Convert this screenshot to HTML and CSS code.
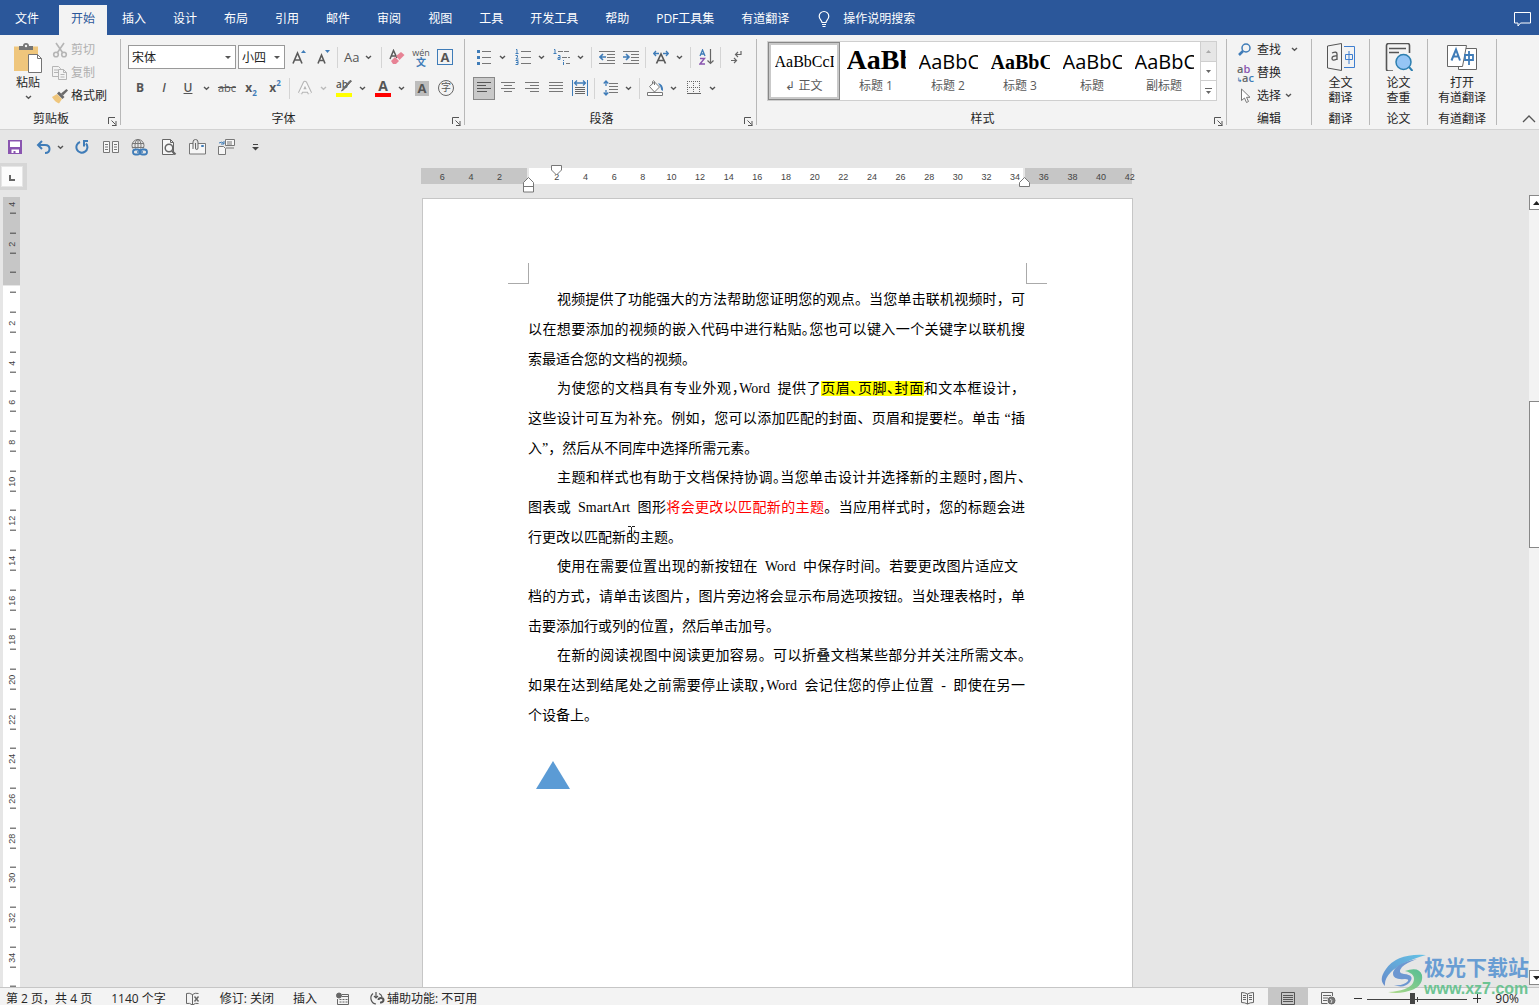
FILE: index.html
```html
<!DOCTYPE html>
<html lang="zh-CN">
<head>
<meta charset="utf-8">
<title>Word</title>
<link rel="stylesheet" href="styles.css">
</head>
<body>
<svg class="defs" aria-hidden="true">
  <symbol id="chev" viewBox="0 0 7 5"><path d="M1 1l2.500 2.200L6 1" fill="none" stroke="currentColor" stroke-width="1.400"/></symbol>
  <symbol id="launch" viewBox="0 0 9 9"><path d="M.5 7V.5H7M3.500 3.500l4 4M8 4v4.500M4 8.500h4.500" fill="none" stroke="#555"/></symbol>
</svg>

<nav class="tabs">
  <button class="tab file">文件</button>
  <button class="tab active">开始</button>
  <button class="tab">插入</button>
  <button class="tab">设计</button>
  <button class="tab">布局</button>
  <button class="tab">引用</button>
  <button class="tab">邮件</button>
  <button class="tab">审阅</button>
  <button class="tab">视图</button>
  <button class="tab">工具</button>
  <button class="tab">开发工具</button>
  <button class="tab">帮助</button>
  <button class="tab">PDF工具集</button>
  <button class="tab">有道翻译</button>
  <button class="tab tell"><svg width="16" height="18" viewBox="0 0 16 18" fill="none" stroke="#fff" stroke-width="1.200"><path d="M6 12.500c0-2-2.800-3-2.800-6.200a4.800 4.800 0 0 1 9.600 0c0 3.200-2.800 4.200-2.800 6.200zM6 14.500h4M6.500 16.500h3"/></svg>操作说明搜索</button>
  <button class="comment" aria-label="批注"><svg width="17" height="15" viewBox="0 0 17 15" fill="none" stroke="#fff"><path d="M.5.5h16v10.500H6.500l-2.500 3v-3H.5z"/></svg></button>
</nav>

<header class="ribbon">
  <section class="group clip">
    <div class="body">
      <button class="paste">
        <svg width="30" height="31" viewBox="0 0 30 31"><path d="M1 4.500h24V29H1z" fill="#efc67c"/><path d="M6 8V4h4a3 3 0 0 1 6 0h4v4z" fill="#747474"/><circle cx="13" cy="4" r="1.200" fill="#f3f3f3"/><path d="M15.500 12.500h9l4 4V30.500h-13z" fill="#fff" stroke="#747474"/><path d="M24.500 12.500v4h4" fill="none" stroke="#747474"/></svg>
        <span>粘贴</span>
        <svg class="caret" width="7" height="5"><use href="#chev"/></svg>
      </button>
      <div class="stack">
        <button class="small" disabled><svg width="16" height="16" viewBox="0 0 16 16" fill="none" stroke="#b5b5b5" stroke-width="1.600"><path d="M4 1l6.500 9.500M12 1L5.500 10.500"/><circle cx="4" cy="12.500" r="2.300"/><circle cx="12" cy="12.500" r="2.300"/></svg>剪切</button>
        <button class="small" disabled><svg width="16" height="16" viewBox="0 0 16 16" fill="#f3f3f3" stroke="#b5b5b5"><path d="M.5 1.500h6l2 2v8h-8zM2 5h4M2 7.500h4"/><path d="M6.500 4.500h5l3 3v7h-8zM11.500 4.500v3h3M8.500 9.500h4M8.500 12h4"/></svg>复制</button>
        <button class="small"><svg width="16" height="16" viewBox="0 0 16 16"><path d="M0 9l5-3 5 5-3 4.500q-4-1.500-7-6.500z" fill="#efc67c"/><path d="M5 5.500l2-2 5.500 5.500-2 2z" fill="#6a6a6a"/><path d="M9 5.500L14.500 1 16 2.500 11 7.500z" fill="#6a6a6a"/></svg>格式刷</button>
      </div>
    </div>
    <footer><span>剪贴板</span><button class="launch" aria-label="剪贴板设置"><svg width="9" height="9"><use href="#launch"/></svg></button></footer>
  </section>

  <section class="group font">
    <div class="body rows">
      <div class="row">
        <span class="pick family"><select aria-label="字体"><option>宋体</option></select></span>
        <span class="pick size"><select aria-label="字号"><option>小四</option></select></span>
        <button class="cell" aria-label="增大字号"><svg width="14" height="16" viewBox="0 0 14 16"><path d="M1 14.500L5.500 4l4.500 10.500M2.800 11h5.500" fill="none" stroke="#5a5a5a" stroke-width="1.600"/><path d="M9 4h5l-2.500-3z" fill="#3f7cb8"/></svg></button>
        <button class="cell" aria-label="减小字号"><svg width="14" height="16" viewBox="0 0 14 16"><path d="M2 14.500L5.500 6 9 14.500M3.500 11.500h4" fill="none" stroke="#5a5a5a" stroke-width="1.600"/><path d="M9 1h5l-2.500 3z" fill="#3f7cb8"/></svg></button>
        <i class="sep"></i>
        <button class="case">Aa<svg class="caret" width="7" height="5"><use href="#chev"/></svg></button>
        <i class="sep"></i>
        <button class="cell" aria-label="清除格式"><svg width="16" height="16" viewBox="0 0 16 16"><path d="M1 10L4.500 1.500 8 9M2.500 7h4" fill="none" stroke="#5a5a5a" stroke-width="1.500"/><path d="M2 12l4-4 4 4-3 3H4z" fill="#e78294"/><path d="M7 7l5-4 3.500 3-5 5z" fill="#e78294"/></svg></button>
        <button class="cell pinyin"><span>wén</span><b>文</b></button>
        <button class="cell"><span class="charbox">A</span></button>
      </div>
      <div class="row">
        <button class="cell bold">B</button>
        <button class="cell italic">I</button>
        <button class="cell under">U</button><button class="drop" aria-label="下划线样式"><svg class="caret" width="7" height="5"><use href="#chev"/></svg></button>
        <button class="cell strike">abc</button>
        <button class="cell script">x<sub>2</sub></button>
        <button class="cell script">x<sup>2</sup></button>
        <i class="sep"></i>
        <button class="cell" aria-label="文本效果"><svg width="16" height="16" viewBox="0 0 16 16" fill="none" stroke-linejoin="round"><path d="M3 13.500L8 3l5 10.500M5 10.500h6" stroke="#b5b5b5" stroke-width="4.500"/><path d="M3 13.500L8 3l5 10.500M5 10.500h6" stroke="#f8f8f8" stroke-width="2.400"/></svg></button><button class="drop off" aria-label="文本效果选项"><svg class="caret" width="7" height="5"><use href="#chev"/></svg></button>
        <button class="cell mark yellow"><span>ab</span><svg width="16" height="12" viewBox="0 0 16 12"><path d="M15.500 1L8 9.500l-2.500 1.500L7 8.500 14 .5z" fill="#6a6a6a" stroke="#6a6a6a"/></svg></button><button class="drop" aria-label="突出显示颜色"><svg class="caret" width="7" height="5"><use href="#chev"/></svg></button>
        <button class="cell mark red"><b>A</b></button><button class="drop" aria-label="字体颜色"><svg class="caret" width="7" height="5"><use href="#chev"/></svg></button>
        <button class="cell"><span class="shade">A</span></button>
        <button class="cell"><span class="ring">字</span></button>
      </div>
    </div>
    <footer><span>字体</span><button class="launch" aria-label="字体设置"><svg width="9" height="9"><use href="#launch"/></svg></button></footer>
  </section>

  <section class="group para">
    <div class="body rows">
      <div class="row">
        <button class="cell" aria-label="项目符号"><svg width="16" height="16" viewBox="0 0 16 16"><path d="M6 2.500h9M6 8.500h9M6 14.500h9" stroke="#777"/><path d="M1 1h3v3H1zM1 7h3v3H1zM1 13h3v3H1z" fill="#3f7cb8"/></svg></button><button class="drop" aria-label="项目符号库"><svg class="caret" width="7" height="5"><use href="#chev"/></svg></button>
        <button class="cell" aria-label="编号"><svg width="16" height="16" viewBox="0 0 16 16"><path d="M6 2.500h10M6 8.500h10M6 14.500h10" stroke="#777"/><path d="M1 .5h1V4M.5 4.500h3M.5 6.500h2v1.500L1 10h2.500M.5 11.500h2.500v4H.5M1 13.500h2" fill="none" stroke="#3f7cb8"/></svg></button><button class="drop" aria-label="编号库"><svg class="caret" width="7" height="5"><use href="#chev"/></svg></button>
        <button class="cell" aria-label="多级列表"><svg width="18" height="16" viewBox="0 0 18 16"><path d="M5 2.500h11M9 8.500h8M13 14.500h4" stroke="#777" stroke-dasharray="5 1"/><path d="M1 .5h1V4M.5 4.500h3M5 6.500h2v4H5v-2h2M10.500 11v1M10.500 13v3" fill="none" stroke="#3f7cb8"/></svg></button><button class="drop" aria-label="多级列表库"><svg class="caret" width="7" height="5"><use href="#chev"/></svg></button>
        <i class="sep"></i>
        <button class="cell" aria-label="减少缩进"><svg width="16" height="14" viewBox="0 0 16 14"><path d="M0 1.500h16M8 4.500h8M8 7.500h8M8 10.500h8M0 13.500h16" stroke="#777"/><path d="M7 7H1.500M4 4L1 7l3 3" stroke="#3f7cb8" stroke-width="1.600" fill="none"/></svg></button>
        <button class="cell" aria-label="增加缩进"><svg width="16" height="14" viewBox="0 0 16 14"><path d="M0 1.500h16M8 4.500h8M8 7.500h8M8 10.500h8M0 13.500h16" stroke="#777"/><path d="M0 7h5.500M3 4l3 3-3 3" stroke="#3f7cb8" stroke-width="1.600" fill="none"/></svg></button>
        <i class="sep"></i>
        <button class="cell" aria-label="中文版式"><svg width="16" height="14" viewBox="0 0 16 14" fill="none"><path d="M3.500 13.500L8 4l4.500 9.500M5 10.500h6" stroke="#5a5a5a" stroke-width="1.700"/><path d="M6 3.500H1M3 1L.7 3.500 3 6M10 3.500h5M13 1l2.300 2.500L13 6" stroke="#3f7cb8" stroke-width="1.300"/></svg></button><button class="drop" aria-label="中文版式选项"><svg class="caret" width="7" height="5"><use href="#chev"/></svg></button>
        <i class="sep"></i>
        <button class="cell" aria-label="排序"><svg width="15" height="16" viewBox="0 0 15 16" fill="none"><path d="M1 7l2.500-6L6 7M2 5h3" stroke="#3f7cb8" stroke-width="1.300"/><path d="M1 9.500h4.500L1 15h5" stroke="#8a55b0" stroke-width="1.400"/><path d="M11.500 0v14.500M8.500 11.500l3 3 3-3" stroke="#666" stroke-width="1.200"/></svg></button>
        <i class="sep"></i>
        <button class="cell" aria-label="显示编辑标记"><svg width="11" height="13" viewBox="0 0 11 13" fill="none" stroke="#666" stroke-width="1.200"><path d="M10 0v3.500H5M7 1L4.500 3.500 7 6M0 9.500h5.500M3 7l2.500 2.500L3 12"/></svg></button>
      </div>
      <div class="row">
        <button class="cell pressed" aria-label="左对齐"><svg width="15" height="12" viewBox="0 0 15 12" stroke="#555"><path d="M0 .5h14M0 3.500h9M0 6.500h14M0 9.500h10"/></svg></button>
        <button class="cell" aria-label="居中"><svg width="15" height="12" viewBox="0 0 15 12" stroke="#777"><path d="M0 .5h14M3 3.500h8M0 6.500h14M3 9.500h8"/></svg></button>
        <button class="cell" aria-label="右对齐"><svg width="15" height="12" viewBox="0 0 15 12" stroke="#777"><path d="M0 .5h14M5 3.500h9M0 6.500h14M5 9.500h9"/></svg></button>
        <button class="cell" aria-label="两端对齐"><svg width="15" height="12" viewBox="0 0 15 12" stroke="#777"><path d="M0 .5h14M0 3.500h14M0 6.500h14M0 9.500h14"/></svg></button>
        <button class="cell" aria-label="分散对齐"><svg width="16" height="16" viewBox="0 0 16 16" fill="none"><path d="M.5 0v16M15.500 0v16" stroke="#3f7cb8"/><path d="M2.500 3h11M5 .5L2.500 3 5 5.500M11 .5L13.500 3 11 5.500" stroke="#3f7cb8" stroke-width="1.300"/><path d="M3 7.500h10M3 9.500h10M3 11.500h10M3 13.500h10" stroke="#666"/></svg></button>
        <i class="sep"></i>
        <button class="cell" aria-label="行距"><svg width="15" height="16" viewBox="0 0 15 16" fill="none"><path d="M6 3.500h9M6 6.500h9M6 9.500h9M6 12.500h9" stroke="#777"/><path d="M3 1v5M.7 3.500L3 1l2.300 2.500M3 10v5M.7 12.500L3 15l2.300-2.500" stroke="#3f7cb8" stroke-width="1.300"/></svg></button><button class="drop" aria-label="行距选项"><svg class="caret" width="7" height="5"><use href="#chev"/></svg></button>
        <i class="sep"></i>
        <button class="cell" aria-label="底纹"><svg width="17" height="16" viewBox="0 0 17 16"><path d="M2.500 6.500L7.500 2l5 5-5 5z" fill="#fff" stroke="#777"/><path d="M7.500 5V1.500a1.200 1.200 0 0 0-2 0V4" fill="none" stroke="#777"/><path d="M11 3q5.500 1 5 8-2.500-1-2.500-4z" fill="#3f7cb8"/><path d="M.5 12.500h15v3H.5z" fill="#fff" stroke="#777"/></svg></button><button class="drop" aria-label="底纹颜色"><svg class="caret" width="7" height="5"><use href="#chev"/></svg></button>
        <button class="cell" aria-label="边框"><svg width="14" height="14" viewBox="0 0 14 14" stroke="#666"><path d="M0 .5h13M0 6.500h13M.5 0v13M6.500 0v13M12.500 0v13" stroke-dasharray="1 1"/><path d="M0 12.500h14"/></svg></button><button class="drop" aria-label="边框选项"><svg class="caret" width="7" height="5"><use href="#chev"/></svg></button>
      </div>
    </div>
    <footer><span>段落</span><button class="launch" aria-label="段落设置"><svg width="9" height="9"><use href="#launch"/></svg></button></footer>
  </section>

  <section class="group styles">
    <div class="body">
      <div class="gallery">
        <button class="style chosen"><span class="look normal">AaBbCcI</span><span>↲ 正文</span></button>
        <button class="style"><span class="look h1">AaBbC</span><span>标题 1</span></button>
        <button class="style"><span class="look h2">AaBbC</span><span>标题 2</span></button>
        <button class="style"><span class="look h3">AaBbC</span><span>标题 3</span></button>
        <button class="style"><span class="look h2">AaBbC</span><span>标题</span></button>
        <button class="style"><span class="look subtitle">AaBbC</span><span>副标题</span></button>
        <div class="scroller">
          <button class="dim" aria-label="上一行"><svg width="5" height="3"><path d="M0 3h5L2.500 0z" fill="#aaa"/></svg></button>
          <button aria-label="下一行"><svg width="5" height="3"><path d="M0 0h5L2.500 3z" fill="#666"/></svg></button>
          <button aria-label="更多样式"><svg width="7" height="6"><path d="M0 .5h7" stroke="#666"/><path d="M1 3h5L3.500 6z" fill="#666"/></svg></button>
        </div>
      </div>
    </div>
    <footer><span>样式</span><button class="launch" aria-label="样式设置"><svg width="9" height="9"><use href="#launch"/></svg></button></footer>
  </section>

  <section class="group edit">
    <div class="body stack">
      <button class="small"><svg width="16" height="16" viewBox="0 0 16 16" fill="none" stroke="#3f7cb8"><circle cx="9" cy="6" r="4" stroke-width="1.500"/><path d="M6 9l-4 4" stroke-width="2.500"/></svg>查找<svg class="caret far" width="7" height="5"><use href="#chev"/></svg></button>
      <button class="small"><span class="swap"><span>a<em>b</em></span><span><i>↳</i>a<b>c</b></span></span>替换</button>
      <button class="small"><svg width="16" height="16" viewBox="0 0 16 16" fill="#fff" stroke="#777"><path d="M4.500 1v11.500l3-2.500 2 4.500 2-1-2-4.200h3.500z"/></svg>选择<svg class="caret near" width="7" height="5"><use href="#chev"/></svg></button>
    </div>
    <footer><span>编辑</span></footer>
  </section>

  <section class="group add">
    <button class="tall body">
      <svg width="28" height="28" viewBox="0 0 28 28" fill="none"><path d="M.5 3L14.500.5v27L.5 25z" stroke="#555"/><path d="M17 3.500h10.500v21H17" stroke="#3f7fd0"/><path d="M5 10q5-2 5 1v6M10 13q-5-.5-5 2.500t5 .5" stroke="#555" stroke-width="1.300"/><path d="M18.500 11.500h7v5h-7zM22 8v13" stroke="#3f7fd0"/></svg>
      <span>全文</span><span>翻译</span>
    </button>
    <footer><span>翻译</span></footer>
  </section>
  <section class="group add">
    <button class="tall body">
      <svg width="28" height="28" viewBox="0 0 28 28" fill="none"><path d="M24.500 10V2.500a2 2 0 0 0-2-2h-19a2 2 0 0 0-2 2V26q0 2 2 2H8" stroke="#555" stroke-width="1.600"/><path d="M4 5.500h17M4 9.500h10" stroke="#555" stroke-width="1.600"/><circle cx="18.500" cy="19" r="7.500" fill="#95c5f5" stroke="#2d7fb0" stroke-width="1.500"/><path d="M24 24l3.500 4" stroke="#2d7fb0" stroke-width="2"/></svg>
      <span>论文</span><span>查重</span>
    </button>
    <footer><span>论文</span></footer>
  </section>
  <section class="group add wide">
    <button class="tall body">
      <svg width="30" height="28" viewBox="0 0 30 28" fill="#fff" stroke="#666"><path d="M11.500 5.500h18v21h-18v-3z"/><path d="M.5 2.500h19l-4 21H.5z"/><path d="M4.500 17.500L9 6.500l4 11M6 13.500h5.500" fill="none" stroke="#3f7cb8" stroke-width="2"/><path d="M18 12h8v5h-8zM22 8v14" fill="none" stroke="#3f7cb8" stroke-width="1.800"/></svg>
      <span>打开</span><span>有道翻译</span>
    </button>
    <footer><span>有道翻译</span></footer>
  </section>
  <button class="collapse" aria-label="折叠功能区"><svg width="14" height="8" viewBox="0 0 14 8"><path d="M1 7l6-6 6 6" fill="none" stroke="#555" stroke-width="1.300"/></svg></button>
</header>

<div class="quick">
  <button aria-label="保存"><svg width="14" height="14" viewBox="0 0 14 14"><path d="M0 0h14v14H0z" fill="#8a55b0"/><path d="M2 1.500h10v5.500H2zM3.500 9.500h7.500V13H7.500v-2H5.500v2h-2z" fill="#fff"/></svg></button>
  <button aria-label="撤消"><svg width="16" height="14" viewBox="0 0 16 14" fill="none" stroke="#3f7cb8" stroke-width="2"><path d="M6 1L2 5l4 4M2 5h7q4.500 0 4.500 4t-4.500 4"/></svg></button>
  <button class="mini" aria-label="撤消列表"><svg class="caret" width="7" height="5"><use href="#chev"/></svg></button>
  <button aria-label="重复"><svg width="14" height="14" viewBox="0 0 14 14" fill="none" stroke="#3f7cb8" stroke-width="2"><path d="M5 2a5.500 5.500 0 1 0 6 1.500M8 1h5M9 1v5.500"/></svg></button>
  <button aria-label="双页"><svg width="16" height="12" viewBox="0 0 16 12" fill="#f6f6f6" stroke="#777"><path d="M.5.5h6v11h-6zM9.500.5h6v11h-6zM2 3.500h3M2 6h3M2 8.500h3M11 3.500h3M11 6h3M11 8.500h3"/></svg></button>
  <button aria-label="链接"><svg width="17" height="17" viewBox="0 0 17 17" fill="none"><circle cx="7" cy="6.500" r="6" stroke="#777"/><ellipse cx="7" cy="6.500" rx="3" ry="6" stroke="#777"/><path d="M1 4.500h12M1 8.500h12M7 .5v8" stroke="#777"/><path d="M1 9.500h16v7.500H1z" fill="#e6e6e6"/><rect x="2" y="10.500" width="7" height="5" rx="2.500" stroke="#3f7cb8" stroke-width="1.800"/><rect x="9" y="10.500" width="7" height="5" rx="2.500" stroke="#3f7cb8" stroke-width="1.800"/><path d="M6 13h6" stroke="#3f7cb8" stroke-width="1.500"/></svg></button>
  <button aria-label="打印预览"><svg width="16" height="16" viewBox="0 0 16 16" fill="#f6f6f6" stroke="#666"><path d="M1.500.5h8l3 3v12h-11zM9.500.5v3h3"/><circle cx="8" cy="9" r="3.800" stroke-width="1.500"/><path d="M11 12l3.500 3.500" stroke-width="2.200"/></svg></button>
  <button aria-label="附件"><svg width="17" height="16" viewBox="0 0 17 16" fill="#f6f6f6" stroke="#777"><path d="M.5 4.500h16v10.500H.5z"/><path d="M4 10V3q0-2.500 2.500-2.500T9 3v6q0 1.500-1.300 1.500T6.500 9V4" stroke="#666" fill="#e6e6e6"/><path d="M12.500 6.500h2v1h-2z" stroke="#3f7cb8"/></svg></button>
  <button aria-label="切换"><svg width="17" height="16" viewBox="0 0 17 16" fill="#f6f6f6" stroke="#777"><path d="M7.500.5h9v6h-9zM9 3h5M9 5h5M8 9h8"/><path d="M.5 7.500h5l2 2v6h-7z"/><path d="M1 4q3-2 5 .5M6 2v3H3" fill="none" stroke="#3f7cb8"/></svg></button>
  <button aria-label="自定义快速访问工具栏"><svg width="7" height="7"><path d="M1 .5h5" stroke="#444"/><path d="M0 3h7L3.500 6.500z" fill="#444"/></svg></button>
</div>

<main class="work">
  <div class="corner"><button aria-label="制表符"><svg width="6" height="6"><path d="M1 0v5h5" fill="none" stroke="#666" stroke-width="2"/></svg></button></div>
  <div class="hruler">
    <div class="marks"><span>6</span><span>4</span><span>2</span><span></span><span>2</span><span>4</span><span>6</span><span>8</span><span>10</span><span>12</span><span>14</span><span>16</span><span>18</span><span>20</span><span>22</span><span>24</span><span>26</span><span>28</span><span>30</span><span>32</span><span>34</span><span>36</span><span>38</span><span>40</span><span>42</span></div>
    <svg class="indent left" width="12" height="17" viewBox="0 0 12 17" fill="#fff" stroke="#777"><path d="M.5 5.500l5-5 5 5v9.500h-10zM.5 9.500h10"/></svg>
    <svg class="indent first" width="12" height="11" viewBox="0 0 12 11" fill="#fff" stroke="#777"><path d="M.5.5h10v4.500l-5 5-5-5z"/></svg>
    <svg class="indent right" width="12" height="11" viewBox="0 0 12 11" fill="#fff" stroke="#777"><path d="M.5 5.500l5-5 5 5v4h-10z"/></svg>
  </div>
  <div class="vruler">
    <div class="marks"><span>4</span><span>2</span><span></span><span>2</span><span>4</span><span>6</span><span>8</span><span>10</span><span>12</span><span>14</span><span>16</span><span>18</span><span>20</span><span>22</span><span>24</span><span>26</span><span>28</span><span>30</span><span>32</span><span>34</span><span>36</span></div>
  </div>
  <article class="page">
    <div class="crops"><i></i><i></i></div>
    <div class="text">
      <p><span class="line in">视频提供了功能强大的方法帮助您证明您的观点。当您单击联机视频时，可</span><span class="line">以在想要添加的视频的嵌入代码中进行粘贴<s>。</s>您也可以键入一个关键字以联机搜</span><span class="line end">索最适合您的文档的视频。</span></p>
      <p><span class="line in">为使您的文档具有专业外观<s>，</s>Word&ensp;提供了<mark>页眉<s>、</s>页脚<s>、</s>封面</mark>和文本框设计，</span><span class="line">这些设计可互为补充。例如，您可以添加匹配的封面、页眉和提要栏。单击 “插</span><span class="line end">入”，然后从不同库中选择所需元素。</span></p>
      <p><span class="line in">主题和样式也有助于文档保持协调<s>。</s>当您单击设计并选择新的主题时<s>，</s>图片<s>、</s></span><span class="line">图表或&ensp;SmartArt&ensp;图形<em>将会更改以匹配新的主题</em>。当应用样式时，您的标题会进</span><span class="line end">行更改以匹配新的主题。</span></p>
      <p><span class="line in short">使用在需要位置出现的新按钮在&ensp;Word&ensp;中保存时间。若要更改图片适应文</span><span class="line">档的方式，请单击该图片，图片旁边将会显示布局选项按钮。当处理表格时，单</span><span class="line end">击要添加行或列的位置，然后单击加号。</span></p>
      <p><span class="line in">在新的阅读视图中阅读更加容易。可以折叠文档某些部分并关注所需文本<s>。</s></span><span class="line">如果在达到结尾处之前需要停止读取<s>，</s>Word&ensp;会记住您的停止位置&ensp;-&ensp;即使在另一</span><span class="line end">个设备上。</span></p>
    </div>
    <svg class="triangle" width="36" height="30" viewBox="0 0 36 30"><path d="M18 1l17 28H1z" fill="#5b9bd5"/></svg>
    <svg class="ibeam" width="7" height="16" viewBox="0 0 7 16" fill="none" stroke="#222"><path d="M0 .5h3M4 .5h3M3.500 1v14M0 15.500h3M4 15.500h3"/></svg>
  </article>
  <div class="vscroll">
    <button aria-label="向上滚动"><svg width="7" height="4"><path d="M0 4h7L3.500 0z" fill="#222"/></svg></button>
    <i></i>
    <button aria-label="向下滚动"><svg width="7" height="4"><path d="M0 0h7L3.500 4z" fill="#222"/></svg></button>
  </div>
</main>

<footer class="status">
  <div class="inner">
    <span>第 2 页，共 4 页</span>
    <span>1140 个字</span>
    <svg width="16" height="14" viewBox="0 0 16 14" fill="none" stroke="#666"><path d="M7.500 2.500Q4 .5 1.500 1.500v10q3-1 6 1.500 3-2.500 6-1.500M7.500 2.500V13M7.500 2.500Q10 .5 13.500 1.500"/><path d="M9.500 4.500l4 5M13.500 4.500l-4 5" stroke-width="1.400"/></svg>
    <span>修订: 关闭</span>
    <span>插入</span>
    <svg width="14" height="14" viewBox="0 0 14 14" fill="none" stroke="#666"><path d="M6 2.500h6.500v10h-11V7M6 4.500h6"/><path d="M3.500 7.500h8M3.500 10h8" stroke-dasharray="2 1"/><circle cx="3" cy="3.500" r="2.500" fill="#666"/></svg>
    <span class="access"><svg width="16" height="16" viewBox="0 0 16 16" fill="none" stroke="#555" stroke-width="1.200"><path d="M4 2.500a6 6 0 0 0 3 10.500M7 1v6M5 5l2 2 2-2M10 2.500q2.500 1 3 3.500" /><path d="M9.500 9q0-2 2.500-2t2.500 2-2.500 2.500v1M12 14v1.500" stroke-width="2"/></svg>辅助功能: 不可用</span>
    <div class="views">
      <button aria-label="阅读视图"><svg width="14" height="13" viewBox="0 0 14 13" fill="none" stroke="#666"><path d="M6.500 2Q4 .5.500.5v10q3.500 0 6 1.500 2.500-1.500 6-1.500V.5Q9 .5 6.500 2v10M2 3.500h3M2 5.500h3M2 7.500h3M8 3.500h3M8 5.500h3M8 7.500h3"/></svg></button>
      <button class="on" aria-label="页面视图"><svg width="14" height="13" viewBox="0 0 14 13" fill="none" stroke="#555"><path d="M.5.5h13v12H.5zM2 3.500h10M2 5.500h10M2 7.500h10M2 9.500h10"/></svg></button>
      <button aria-label="Web 版式"><svg width="15" height="13" viewBox="0 0 15 13" fill="none" stroke="#666"><path d="M11.500 4V.5H.5v11h6M2 3.500h8M2 6h5M2 8.500h4"/><circle cx="10.500" cy="8.500" r="3.500" fill="#777"/><path d="M9 7l2 1.500-1 2.500" stroke="#ddd"/></svg></button>
    </div>
    <button class="zoom" aria-label="缩小"><svg width="9" height="9"><path d="M0 4.500h8" stroke="#333"/></svg></button>
    <input type="range" min="0" max="100" value="45" aria-label="缩放">
    <button class="zoom" aria-label="放大"><svg width="9" height="9"><path d="M0 4.500h8M4.500 0v9" stroke="#333"/></svg></button>
    <span class="percent">90%</span>
  </div>
</footer>

<aside class="brand">
  <svg width="46" height="42" viewBox="0 0 46 42">
    <defs>
      <linearGradient id="sky" x1="0" y1="1" x2="1" y2="0"><stop offset="0" stop-color="#5a83c9"/><stop offset="1" stop-color="#55bfe6"/></linearGradient>
      <linearGradient id="leaf" x1="0" y1="1" x2="1" y2="0"><stop offset="0" stop-color="#a8d87c"/><stop offset="1" stop-color="#45b98b"/></linearGradient>
    </defs>
    <path d="M45 1Q16-1 5 15-3 26 4 32q-1-7 6-14Q20 8 45 1z" fill="url(#sky)"/>
    <path d="M36 5Q12 10 12 20q0 6 12 5 4 0 3 2-4 5-14 4 10 4 16-3 5-7-6-8-7-1-2-7 4-4 15-8z" fill="#5f8fcf"/>
    <path d="M24 17q14-5 17 4 2 13-17 17-10 2-17 0 20-1 25-9 4-9-8-12z" fill="url(#leaf)"/>
  </svg>
  <div><strong>极光下载站</strong><span>www.xz7.com</span></div>
</aside>
</body>
</html>
```
FILE: styles.css
```css
* { box-sizing: border-box; }
html, body { height: 100%; }
body {
  margin: 0;
  display: flex;
  flex-direction: column;
  overflow: hidden;
  position: relative;
  background: #e6e6e6;
  color: #262626;
  font: 12px/16px "Open Sans", "Noto Sans CJK SC", sans-serif;
}
svg { display: block; flex: none; }
.defs { position: absolute; width: 0; height: 0; }
button {
  border: 0;
  padding: 0;
  background: none;
  color: inherit;
  font: inherit;
  white-space: nowrap;
}
.caret { color: #555; }

/* tab strip */
.tabs {
  flex: none;
  display: flex;
  align-items: flex-end;
  gap: 3px;
  height: 35px;
  padding-left: 3px;
  background: #2b579a;
  color: #fff;
}
.tab { height: 30px; padding: 0 12px 2px; }
.tab.file { margin-right: 5px; }
.tab.active { background: #f3f3f3; color: #2b579a; }
.tab.tell { display: flex; align-items: center; gap: 11px; }
.comment { margin: 0 8px 8px auto; }

/* ribbon */
.ribbon {
  flex: none;
  display: flex;
  height: 95px;
  padding: 4px 0;
  background: #f3f3f3;
  border-bottom: 1px solid #d2d2d2;
}
.group {
  flex: none;
  display: flex;
  flex-direction: column;
  border-right: 1px solid #b8b8b8;
}
.group footer { flex: none; display: flex; height: 15px; line-height: 18px; text-align: center; }
.group footer span { flex: 1; }
.launch { width: 18px; padding: 7px 0 0 6px; }
.body { flex: 1; min-height: 0; }
.rows { display: flex; flex-direction: column; gap: 7px; padding: 6px 0 0 7px; }
.row { display: flex; align-items: center; height: 24px; }
.cell {
  flex: none;
  width: 24px;
  height: 24px;
  display: flex;
  align-items: center;
  justify-content: center;
  color: #555;
}
.drop { flex: none; width: 15px; height: 24px; padding-left: 3px; }
.drop.off .caret { color: #bbb; }
.sep { flex: none; width: 4px; height: 21px; margin-left: 2px; border-left: 1px solid #d4d4d4; }

.clip { width: 121px; }
.clip .body { display: flex; }
.paste {
  width: 52px;
  padding: 3px 0 0 4px;
  display: flex;
  flex-direction: column;
  align-items: center;
}
.paste span { line-height: 20px; }
.paste .caret { margin-top: 2px; }
.stack { display: flex; flex-direction: column; gap: 2px; }
.small { display: flex; align-items: center; gap: 3px; height: 21px; }
.small:disabled { color: #b0b0b0; }

.font { width: 344px; }
.pick { position: relative; height: 24px; margin-right: 2px; }
.pick::after {
  content: "";
  position: absolute;
  right: 5px;
  top: 11px;
  border: 3px solid transparent;
  border-top-color: #555;
  border-bottom: 0;
}
.pick select {
  appearance: none;
  width: 100%;
  height: 24px;
  padding: 1px 3px 0;
  border: 1px solid #999;
  border-radius: 0;
  background: #fff;
  color: #222;
  font: inherit;
}
.family { width: 108px; }
.size { width: 47px; }
.case { display: flex; align-items: center; gap: 4px; width: 38px; padding-left: 3px; color: #555; font-size: 13px; }
.case .caret { margin-left: 2px; }
.pinyin { flex-direction: column; }
.pinyin span { font-size: 9px; line-height: 9px; }
.pinyin b { font-size: 10px; line-height: 10px; color: #3f7cb8; }
.charbox { width: 16px; height: 16px; border: 1px solid #3f7cb8; font: 700 13px/14px "Open Sans", sans-serif; }
.bold { font-weight: 700; }
.italic { font-style: italic; font-weight: 600; }
.under { font-weight: 600; text-decoration: underline; }
.strike { font-size: 11px; text-decoration: line-through; }
.script { font-weight: 700; font-size: 12px; }
.script sub, .script sup { font-size: 8px; line-height: 8px; color: #3f7cb8; }
.script sub { align-self: flex-end; margin-bottom: 3px; }
.script sup { align-self: flex-start; margin-top: 3px; }
.mark { position: relative; }
.mark::after { content: ""; position: absolute; left: 4px; top: 17px; width: 16px; height: 4px; }
.mark.yellow::after { background: #ff0; }
.mark.red::after { background: #f00; }
.mark span { font-size: 10px; font-weight: 600; margin: 0 -12px 8px 0; }
.mark svg { margin-bottom: 4px; }
.mark b { font-size: 14px; line-height: 16px; margin-bottom: 4px; }
.shade { width: 14px; height: 15px; background: #bdbdbd; font: 700 13px/15px "Open Sans", sans-serif; }
.ring { width: 16px; height: 16px; border: 1px solid #666; border-radius: 8px; font-size: 10px; line-height: 13px; }
.pressed { background: #c9c9c9; border: 1px solid #888; width: 22px; height: 23px; margin: 0 1px; }
.para { width: 292px; }

.styles { flex: 1; min-width: 0; }
.styles .body { padding: 2px 9px 0 10px; overflow: hidden; }
.gallery { display: flex; width: 450px; height: 60px; border: 1px solid #cfcfcf; background: #fff; }
.style { flex: none; width: 72px; display: flex; flex-direction: column; align-items: center; color: #5a5a5a; }
.style.chosen { border: 1px solid #888; box-shadow: inset 0 0 0 2px #c9c9c9; }
.look {
  width: 59px;
  height: 36px;
  overflow: hidden;
  color: #000;
  text-align: left;
  font-size: 20px;
  line-height: 40px;
  font-family: "Open Sans", sans-serif;
}
.look.normal { height: 35px; font: 16px/38px "Liberation Serif", serif; }
.look.h1 { font: 700 28px/36px "Liberation Serif", serif; }
.look.h3 { font: 700 20px/40px "Liberation Serif", serif; }
.look.subtitle { font-weight: 500; }
.scroller { width: 16px; display: flex; flex-direction: column; border-left: 1px solid #cfcfcf; }
.scroller button { flex: 1; display: flex; align-items: center; justify-content: center; border-bottom: 1px solid #cfcfcf; }
.scroller button:last-child { border: 0; }
.scroller .dim { background: #e6e6e6; }

.edit { width: 85px; }
.edit .stack { padding-left: 10px; }
.edit .small { gap: 4px; }
.far { margin-left: 6px; }
.swap { width: 16px; height: 18px; display: flex; flex-direction: column; font-size: 11px; line-height: 9px; font-weight: 600; color: #666; text-align: left; }
.swap em { font-style: normal; color: #8a55b0; }
.swap b, .swap i { font-weight: 600; font-style: normal; color: #3f7cb8; }
.swap i { font-size: 6px; }
.add { width: 58px; }
.add.wide { width: 69px; }
.tall { display: flex; flex-direction: column; align-items: center; padding-top: 4px; line-height: 15px; }
.tall svg { margin-bottom: 4px; }
.collapse { flex: none; width: 42px; padding: 74px 3px 0 25px; }

/* quick access bar */
.quick { flex: none; display: flex; height: 33px; }
.quick button { width: 29px; height: 34px; display: flex; align-items: center; justify-content: center; }
.quick .mini { width: 9px; padding-right: 4px; }

/* document area */
.work {
  flex: 1;
  min-height: 0;
  display: grid;
  grid-template-columns: 26px 1fr 10px;
  grid-template-rows: 34px 1fr;
  overflow: hidden;
}
.corner { width: 27px; height: 27px; padding: 3px 0 0 1px; background: #d6d6d6; }
.corner button { width: 22px; height: 21px; background: #fcfcfc; border: 1px solid #e6e6e6; padding-left: 7px; padding-top: 3px; }
.hruler {
  position: relative;
  justify-self: center;
  width: 713px;
  height: 16px;
  margin-top: 5px;
  background: linear-gradient(90deg, #c6c6c6 106px, #e6e6e6 106px 108px, #fff 108px 602px, #e6e6e6 602px 604px, #c6c6c6 604px 711px, transparent 711px);
  font: 9px/18px "Liberation Sans", sans-serif;
  color: #444;
}
.hruler .marks { display: grid; grid-template-columns: repeat(25, 1fr); width: 716px; margin-left: 7px; text-align: center; }
.indent { position: absolute; }
.indent.left { left: 102px; top: 9px; }
.indent.first { left: 130px; top: -3px; }
.indent.right { left: 598px; top: 9px; }
.vruler {
  grid-row: 2;
  width: 17px;
  margin-left: 3px;
  overflow: hidden;
  background: linear-gradient(#c6c6c6 88px, #e6e6e6 88px 89px, #fff 89px);
  font: 9px/10px "Liberation Sans", sans-serif;
  color: #444;
}
.vruler .marks { display: grid; grid-auto-rows: 1fr; height: 833px; margin-top: -13px; }
.vruler span {
  writing-mode: vertical-rl;
  transform: rotate(180deg);
  display: flex;
  align-items: center;
  justify-content: center;
  position: relative;
}
.vruler span::before, .vruler span::after { content: ""; position: absolute; left: 4px; width: 6px; height: 1px; background: #444; }
.vruler span::before { top: 10px; }
.vruler span::after { bottom: 9px; }
.page {
  position: relative;
  grid-row: 2;
  grid-column: 2;
  justify-self: center;
  width: 711px;
  margin-top: 1px;
  padding: 64px 85px 0;
  border: 1px solid #c6c6c6;
  border-bottom: 0;
  background: #fff;
}
.crops { display: flex; justify-content: space-between; }
.crops i { width: 21px; height: 21px; border: solid #aaa; border-width: 0 1px 1px 0; }
.crops i + i { border-width: 0 0 1px 1px; }
.text {
  margin: 1px 22px 0 20px;
  color: #000;
  font: 14px/30px "Liberation Serif", "Noto Sans CJK SC", serif;
}
.text p { margin: 0 0 -1px; }
.line { display: block; white-space: nowrap; text-align: justify; text-align-last: justify; }
.line.in { padding-left: 29px; }
.line.short { padding-right: 7px; }
.line.end { text-align-last: left; }
.text s { text-decoration: none; font-feature-settings: "halt"; }
.text em { font-style: normal; color: #f00; }
.text mark { background: #ff0; color: inherit; }
.triangle { position: absolute; left: 112px; top: 561px; }
.ibeam { position: absolute; left: 205px; top: 327px; }
.vscroll {
  grid-row: 1 / 3;
  grid-column: 3;
  margin: 32px 0 2px;
  display: flex;
  flex-direction: column;
  background: #f3f3f3;
  overflow: hidden;
}
.vscroll button { flex: none; width: 15px; height: 15px; padding-left: 3px; border: 1px solid #888; background: #fff; }
.vscroll button:last-child { margin-top: auto; }
.vscroll i { width: 15px; height: 147px; margin-top: 191px; border: 1px solid #888; background: #fff; }

/* status bar */
.status { flex: none; height: 18px; overflow: hidden; background: #f3f3f3; border-top: 1px solid #c6c6c6; }
.inner { display: flex; align-items: center; gap: 19px; height: 21px; padding: 0 20px 0 6px; white-space: nowrap; }
.access { display: flex; align-items: center; gap: 2px; }
.views { display: flex; margin-left: auto; }
.views button { width: 40px; height: 21px; display: flex; align-items: center; justify-content: center; }
.views .on { background: #c6c6c6; }
.zoom { margin-left: -13px; }
.inner input {
  appearance: none;
  width: 100px;
  height: 12px;
  margin: 0 0 0 -15px;
  background: linear-gradient(#444, #444) 50px 4px / 1px 5px no-repeat, linear-gradient(#444, #444) 0 6px / 100px 1px no-repeat;
}
.inner input::-webkit-slider-thumb { appearance: none; width: 5px; height: 11px; background: #444; }
.percent { margin-left: -6px; }

/* site mark over the lower right corner */
.brand { position: absolute; right: 10px; bottom: 8px; display: flex; opacity: 0.9; pointer-events: none; }
.brand > svg { margin-right: -3px; }
.brand div { display: flex; flex-direction: column; }
.brand strong { font-size: 21px; line-height: 26px; color: #5b96d2; }
.brand span { font: 700 16px/17px "Liberation Sans", sans-serif; color: #5fc08a; }
```
